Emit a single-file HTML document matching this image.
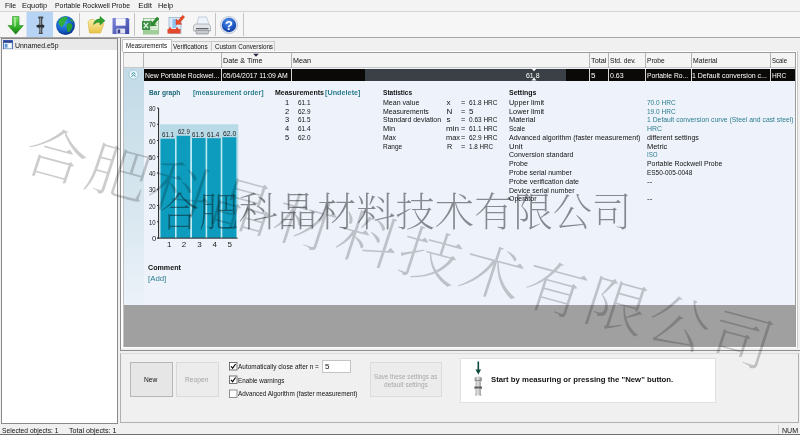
<!DOCTYPE html>
<html><head><meta charset="utf-8">
<title>Equotip</title>
<style>
*{box-sizing:border-box;margin:0;padding:0}
html,body{width:800px;height:435px;overflow:hidden;background:#f0f0f0}
body{position:relative;font-family:"Liberation Sans","Noto Sans CJK SC",sans-serif;font-size:8px;color:#000;line-height:1}
.a{position:absolute;white-space:nowrap}
.t{position:absolute;white-space:nowrap;font-size:8px;line-height:10px;transform-origin:0 0;color:#111}
.wm{position:absolute;white-space:nowrap;font-family:"Liberation Serif","Noto Serif CJK SC",serif;line-height:1;transform-origin:0 0}
</style></head><body>
<div id="root" style="position:absolute;left:0;top:0;width:800px;height:435px;will-change:transform">
<!-- menu bar -->
<div class="a" style="left:0;top:0;width:800px;height:11px;background:#f3f3f3"></div>
<!-- toolbar -->
<div class="a" style="left:0;top:11px;width:800px;height:1px;background:#d4d4d4"></div>
<div class="a" style="left:0;top:12px;width:800px;height:25px;background:#f6f6f6"></div>
<div class="a" style="left:0;top:37px;width:800px;height:1px;background:#a6a6a6"></div>
<svg class="a" style="left:0;top:12px" width="260" height="25" viewBox="0 12 260 25">
<defs>
<linearGradient id="gA" x1="0" y1="0" x2="0" y2="1"><stop offset="0" stop-color="#7be06a"/><stop offset=".55" stop-color="#35b52c"/><stop offset="1" stop-color="#157a12"/></linearGradient>
<radialGradient id="gG" cx=".4" cy=".35" r=".7"><stop offset="0" stop-color="#3fa0f0"/><stop offset=".6" stop-color="#1560c8"/><stop offset="1" stop-color="#0a2f86"/></radialGradient>
<radialGradient id="gH" cx=".45" cy=".3" r=".8"><stop offset="0" stop-color="#5a98ee"/><stop offset=".6" stop-color="#1d55c0"/><stop offset="1" stop-color="#0e2f8a"/></radialGradient>
<linearGradient id="gF" x1="0" y1="0" x2="1" y2="1"><stop offset="0" stop-color="#8088dc"/><stop offset="1" stop-color="#3a46a4"/></linearGradient>
<linearGradient id="gY" x1="0" y1="0" x2="0" y2="1"><stop offset="0" stop-color="#fbeeb0"/><stop offset="1" stop-color="#e8c344"/></linearGradient>
</defs>
<!-- down arrow -->
<path d="M12.5 16.5h6.5v9h4.3L15.7 34.2 8 25.5h4.5z" fill="url(#gA)" stroke="#2c8a26" stroke-width=".6"/>
<path d="M14 17.5h2v9h-2z" fill="#b6f2a8" opacity=".7"/>
<!-- selected probe -->
<rect x="26.5" y="12" width="26.5" height="25" fill="#b8d4f5"/>
<path d="M38.5 16.5h4.5l.5 1.5-1.2 1v5l1.5 1.2v2.3l-1.5 1v3.5l.7 2h-4.4l.6-2v-3.6l-1.6-1v-2.2l1.6-1.2v-5l-1.3-1z" fill="#4a4e54"/>
<path d="M39.8 18h1.2v15h-1.2z" fill="#8a9098"/>
<rect x="36.6" y="25" width="7.6" height="2.2" fill="#2c2f33"/>
<!-- globe -->
<circle cx="65.5" cy="25.5" r="9.4" fill="url(#gG)"/>
<path d="M60 19c2-2 5-2.5 7-2 1 1 .5 2.500-1 3-1 1.500-.5 3-2 4s-1 3-2.500 3c-1.500-1-3-3-3-5 .2-1.200.8-2.200 1.500-3z" fill="#2fae3a"/>
<path d="M67 24c1.500-1 4-1 5 .5 1 2-.5 5.500-3 7.500-1.500.5-2-1.500-2-3s-1-3.500 0-5z" fill="#27a034"/>
<path d="M70 18.500c1.500.8 2.600 2 3.400 3.500-1.200.2-2.400-.5-3-1.500z" fill="#2fae3a"/>
<!-- sep -->
<rect x="79" y="13" width="1" height="23" fill="#c4c4c4"/>
<!-- open folder -->
<path d="M88 22l2-2.500h4l1.500 1.500h6v3l2.500-.5-3.500 9.500H89.500z" fill="url(#gY)" stroke="#d8b43c" stroke-width=".6"/>
<path d="M93.500 24.500c.5-3.500 3-5.500 6.500-5.500v-2.500l5 4.200-5 4.300v-2.600c-2.500-.2-4.600.4-6.500 2.100z" fill="#2ea22e" stroke="#1c7a1c" stroke-width=".5"/>
<!-- floppy -->
<path d="M112.500 18h15.500l1.200 1.200V34h-16.700z" fill="url(#gF)"/>
<rect x="115.800" y="18.300" width="9.800" height="7.400" fill="#f4f6fc"/>
<rect x="116.500" y="28.600" width="8.600" height="5" fill="#dfe3f2"/>
<rect x="117.600" y="29.500" width="2.600" height="3.600" fill="#39408a"/>
<!-- sep -->
<rect x="134" y="13" width="1" height="23" fill="#c4c4c4"/>
<!-- excel export -->
<rect x="143.500" y="18.500" width="15" height="15.500" fill="#e6f3e4" stroke="#86b986" stroke-width=".8"/>
<path d="M143.500 23.500h15M143.500 28.500h15M151 18.500v15.500" stroke="#b4d8b2" stroke-width=".7"/>
<rect x="143.500" y="30" width="15" height="4" fill="#9fce98"/>
<path d="M142 21h8v9h-8z" fill="#3f9149"/>
<path d="M143.800 22.800l4.400 5.400M148.200 22.800l-4.400 5.400" stroke="#e8f6e6" stroke-width="1.300"/>
<path d="M150.500 26v-5.500l2 1.800 4.500-5.300 2 1.700-4.500 5.300 2 1.700z" fill="#2a8a2e" stroke="#1e6e1e" stroke-width=".4"/>
<!-- chart export -->
<rect x="169" y="17.500" width="12" height="16" fill="#dbe9f6" stroke="#9ab6d2" stroke-width=".8"/>
<rect x="172.500" y="19" width="4" height="9" fill="#8ec4ee"/>
<rect x="167.500" y="29" width="13" height="4.500" fill="#e2482c"/>
<rect x="169" y="27.500" width="2.200" height="2" fill="#e2482c"/><rect x="176" y="27.500" width="2.200" height="2" fill="#e2482c"/>
<path d="M176 24.500v-5.500l2 1.800 4.700-5.500 2 1.700-4.700 5.500 2 1.700z" fill="#ea4a26" stroke="#b8321a" stroke-width=".4"/>
<!-- printer -->
<path d="M197 24.500l1.500-7.500h8l2.500 7.500z" fill="#eef4fb" stroke="#a9b7c6" stroke-width=".6"/>
<path d="M193.500 26.500c0-1.500 1.500-2.500 3-2.500h11c1.500 0 3 1 3 2.500v4.500h-17z" fill="#e3e5e8" stroke="#8e949b" stroke-width=".6"/>
<path d="M195.500 30.500h13.500l-1 3.500h-11.500z" fill="#c8ccd1" stroke="#7c8289" stroke-width=".6"/>
<rect x="196" y="28" width="12.500" height="1.300" fill="#5c6168"/>
<!-- sep -->
<rect x="215" y="13" width="1" height="23" fill="#c4c4c4"/>
<!-- help -->
<circle cx="229" cy="25" r="8.600" fill="#dfe6f2" stroke="#aab6cc" stroke-width=".6"/>
<circle cx="229" cy="25" r="7.200" fill="url(#gH)"/>
<text x="229" y="29.600" text-anchor="middle" font-family="Liberation Sans,sans-serif" font-weight="bold" font-size="13" fill="#fff">?</text>
<rect x="243" y="13" width="1" height="23" fill="#c4c4c4"/>
</svg>
<!-- left tree -->
<div class="a" style="left:1px;top:38px;width:117px;height:386px;background:#fff;border:1px solid #8a8a8a"></div>
<div class="a" style="left:2px;top:39px;width:115px;height:10.500px;background:#e9e9e9"></div>
<svg class="a" style="left:3px;top:39.500px" width="10" height="9.500" viewBox="0 0 10 9.500"><rect x=".5" y=".5" width="9" height="8.500" fill="#dfeaf8" stroke="#4468b0" stroke-width=".9"/><rect x=".5" y=".5" width="9" height="2.300" fill="#2b3f95"/><rect x="1.800" y="4" width="2.600" height="3.600" fill="#5f94d8"/><rect x="5.400" y="4" width="2.600" height="3.600" fill="#fff"/></svg>
<!-- right frame -->
<div class="a" style="left:120px;top:38px;width:680px;height:313px;border-left:1px solid #8e8e8e;border-bottom:1px solid #8e8e8e"></div>
<div class="a" style="left:121px;top:51px;width:677px;height:297px;background:#fff;border-right:1px solid #c8c8c8"></div>
<!-- tabs -->
<div class="a" style="left:171px;top:40.500px;width:104px;height:10.500px;background:#f0f0f0;border:1px solid #cacaca;border-bottom:none;border-left:none"></div>
<div class="a" style="left:211px;top:40.500px;width:1px;height:10.500px;background:#cacaca"></div>
<div class="a" style="left:122px;top:39px;width:50px;height:13px;background:#fff;border:1px solid #c4c4c4;border-bottom:none"></div>
<!-- grid -->
<div class="a" style="left:123px;top:52px;width:673px;height:295px;border:1px solid #9c9c9c;border-left-color:#c2c2c2;border-bottom:none"></div>
<div class="a" style="left:124px;top:53px;width:671px;height:15px;background:#f4f4f4"></div>
<div class="a" style="left:124px;top:67px;width:671px;height:1px;background:#c8c8c8"></div>
<div class="a" style="left:124px;top:68px;width:19.500px;height:237px;background:linear-gradient(#c2dbe7,#d6e6ef 55%,#ecf2f9)"></div>
<div class="a" style="left:143.500px;top:68px;width:651.500px;height:237px;background:#eef3fb"></div>
<div class="a" style="left:124px;top:304.500px;width:671px;height:42.500px;background:#a0a0a0"></div>
<div class="a" style="left:144px;top:68.500px;width:650.500px;height:12px;background:#0b0907"></div>
<div class="a" style="left:364.500px;top:68.500px;width:201.500px;height:12px;background:#3a4045"></div>
<div class="a" style="left:142.500px;top:53px;width:1px;height:15px;background:#b4b4b4"></div>
<div class="a" style="left:221px;top:53px;width:1px;height:15px;background:#b4b4b4"></div>
<div class="a" style="left:290.500px;top:53px;width:1px;height:15px;background:#b4b4b4"></div>
<div class="a" style="left:589px;top:53px;width:1px;height:15px;background:#b4b4b4"></div>
<div class="a" style="left:608px;top:53px;width:1px;height:15px;background:#b4b4b4"></div>
<div class="a" style="left:644.500px;top:53px;width:1px;height:15px;background:#b4b4b4"></div>
<div class="a" style="left:690.500px;top:53px;width:1px;height:15px;background:#b4b4b4"></div>
<div class="a" style="left:769.500px;top:53px;width:1px;height:15px;background:#b4b4b4"></div>
<div class="a" style="left:221px;top:68.500px;width:1px;height:12px;background:#d8d8d8"></div>
<div class="a" style="left:290.500px;top:68.500px;width:1px;height:12px;background:#d8d8d8"></div>
<div class="a" style="left:589px;top:68.500px;width:1px;height:12px;background:#d8d8d8"></div>
<div class="a" style="left:608px;top:68.500px;width:1px;height:12px;background:#d8d8d8"></div>
<div class="a" style="left:644.500px;top:68.500px;width:1px;height:12px;background:#d8d8d8"></div>
<div class="a" style="left:690.500px;top:68.500px;width:1px;height:12px;background:#d8d8d8"></div>
<div class="a" style="left:769.500px;top:68.500px;width:1px;height:12px;background:#d8d8d8"></div>
<svg class="a" style="left:252px;top:53px" width="8" height="5"><path d="M1.200 .8h5.600L4 3.800z" fill="#1e2440"/></svg>
<svg class="a" style="left:128px;top:69px" width="11" height="11" viewBox="0 0 11 11"><circle cx="5.500" cy="5.500" r="4.600" fill="#e9f5f9" stroke="#93c3d1" stroke-width=".8"/><path d="M3.500 5.200 5.500 3.400 7.500 5.200M3.500 7.600 5.500 5.800 7.500 7.600" fill="none" stroke="#2e8296" stroke-width="1"/></svg>
<svg class="a" style="left:530px;top:68px" width="8" height="13"><path d="M1.500 .5h5L4 3.200zM1.500 12.500h5L4 9.800z" fill="#fff"/></svg>
<svg class="a" style="left:140px;top:100px" width="110" height="145" viewBox="140 100 110 145"><rect x="160" y="124.25" width="78.3" height="82.88" fill="#b9dbe7"/><rect x="160" y="138.88" width="77" height="99.12" fill="#bdeaf3"/><rect x="160.5" y="138.71" width="14.50" height="99.29" fill="#0d9cbd"/><rect x="176.6" y="135.79" width="13.60" height="102.21" fill="#0d9cbd"/><rect x="192" y="138.06" width="13.60" height="99.94" fill="#0d9cbd"/><rect x="207.2" y="138.23" width="13.50" height="99.77" fill="#0d9cbd"/><rect x="222.3" y="137.25" width="14.10" height="100.75" fill="#0d9cbd"/><rect x="158" y="108.00" width="1.1" height="130.60" fill="#333"/><rect x="157.3" y="237.60" width="80.3" height="1.1" fill="#333"/><rect x="157" y="237.50" width="1.6" height="1" fill="#333"/><rect x="157" y="221.25" width="1.6" height="1" fill="#333"/><rect x="157" y="205.00" width="1.6" height="1" fill="#333"/><rect x="157" y="188.75" width="1.6" height="1" fill="#333"/><rect x="157" y="172.50" width="1.6" height="1" fill="#333"/><rect x="157" y="156.25" width="1.6" height="1" fill="#333"/><rect x="157" y="140.00" width="1.6" height="1" fill="#333"/><rect x="157" y="123.75" width="1.6" height="1" fill="#333"/><rect x="157" y="107.50" width="1.6" height="1" fill="#333"/></svg>
<!-- bottom panel -->
<div class="a" style="left:120px;top:353px;width:679px;height:70px;border:1px solid #b0b0b0;border-top-color:#dcdcdc;background:#f0f0f0"></div>
<div class="a" style="left:129.500px;top:362px;width:43px;height:35px;background:#e6e6e6;border:1px solid #b6b6b6"></div>
<div class="a" style="left:175.500px;top:362px;width:43.500px;height:35px;background:#ececec;border:1px solid #dadada"></div>
<div class="a" style="left:370px;top:362px;width:72px;height:34.500px;background:#ececec;border:1px solid #dcdcdc"></div>
<div class="a" style="left:322px;top:359.500px;width:28.500px;height:13px;background:#fff;border:1px solid #c4c4c4"></div>
<svg class="a" style="left:229px;top:362px" width="9" height="36" viewBox="0 0 9 36"><rect x=".5" y=".5" width="7.500" height="7.500" fill="#fff" stroke="#555" stroke-width=".8"/><path d="M2 4.300l1.600 1.900L6.600 2" fill="none" stroke="#111" stroke-width="1.200"/><rect x=".5" y="14" width="7.500" height="7.500" fill="#fff" stroke="#555" stroke-width=".8"/><path d="M2 17.800l1.600 1.900L6.600 15.500" fill="none" stroke="#111" stroke-width="1.200"/><rect x=".5" y="28" width="7.500" height="7.500" fill="#fff" stroke="#777" stroke-width=".8"/></svg>
<div class="a" style="left:460px;top:357.500px;width:255.500px;height:45px;background:#fff;border:1px solid #e0e0e0"></div>
<svg class="a" style="left:472px;top:360px" width="13" height="37" viewBox="472 360 13 37"><defs><linearGradient id="gP" x1="0" y1="0" x2="1" y2="0"><stop offset="0" stop-color="#8c8c8c"/><stop offset=".45" stop-color="#e6e6e6"/><stop offset="1" stop-color="#7a7a7a"/></linearGradient></defs>
<path d="M477.500 361.500h1.600v8h2l-2.800 5-2.800-5h2z" fill="#0f4b3c"/>
<path d="M474.600 377.800q3.600-2.400 7.200 0v2.400l-1 1v5.200h1v2.600h-1v4.800l.8 1.800h-6.800l.8-1.800v-4.800h-1v-2.600h1v-5.200l-1-1z" fill="url(#gP)"/>
<rect x="474.600" y="386.600" width="7.200" height="1.800" fill="#5a5a5a"/><rect x="474.800" y="380" width="6.800" height=".8" fill="#808080"/>
</svg>
<!-- status bar -->
<div class="a" style="left:0;top:424px;width:800px;height:11px;background:#f0f0f0"></div>
<div class="a" style="left:777.500px;top:425px;width:1px;height:9px;background:#d0d0d0"></div>
<div class="a" style="left:0;top:434px;width:800px;height:1px;background:#6e6e6e"></div>
<div class="t" style="left:4.53px;top:0.50px;transform:scaleX(0.8583);">File</div>
<div class="t" style="left:22.49px;top:0.50px;transform:scaleX(0.9231);">Equotip</div>
<div class="t" style="left:55.03px;top:0.50px;transform:scaleX(0.8563);">Portable Rockwell Probe</div>
<div class="t" style="left:138.15px;top:0.50px;transform:scaleX(1.0000);">Edit</div>
<div class="t" style="left:158.19px;top:0.50px;transform:scaleX(0.9200);">Help</div>
<div class="t" style="left:15.32px;top:40.50px;transform:scaleX(0.8653);">Unnamed.e5p</div>
<div class="t" style="left:125.57px;top:40.50px;transform:scaleX(0.7788);">Measurements</div>
<div class="t" style="left:173.36px;top:41.50px;transform:scaleX(0.8024);">Verifications</div>
<div class="t" style="left:214.57px;top:41.50px;transform:scaleX(0.7808);">Custom Conversions</div>
<div class="t" style="left:223.31px;top:55.50px;transform:scaleX(0.9000);">Date &amp; Time</div>
<div class="t" style="left:292.51px;top:55.50px;transform:scaleX(0.8947);">Mean</div>
<div class="t" style="left:590.50px;top:55.50px;transform:scaleX(0.9125);">Total</div>
<div class="t" style="left:610.34px;top:55.50px;transform:scaleX(0.8333);">Std. dev.</div>
<div class="t" style="left:646.95px;top:55.50px;transform:scaleX(0.8250);">Probe</div>
<div class="t" style="left:693.13px;top:55.50px;transform:scaleX(0.8556);">Material</div>
<div class="t" style="left:772.09px;top:55.50px;transform:scaleX(0.7526);">Scale</div>
<div class="t" style="left:145.03px;top:70.50px;transform:scaleX(0.8523);color:#fff">New Portable Rockwel...</div>
<div class="t" style="left:223.03px;top:70.50px;transform:scaleX(0.8581);color:#fff">05/04/2017 11:09 AM</div>
<div class="t" style="left:526.02px;top:70.50px;transform:scaleX(0.8667);color:#fff">61.8</div>
<div class="t" style="left:590.95px;top:70.50px;transform:scaleX(1.0000);color:#fff">5</div>
<div class="t" style="left:610.32px;top:70.50px;transform:scaleX(0.8800);color:#fff">0.63</div>
<div class="t" style="left:646.94px;top:70.50px;transform:scaleX(0.8417);color:#fff">Portable Ro...</div>
<div class="t" style="left:692.32px;top:70.50px;transform:scaleX(0.8729);color:#fff">1 Default conversion c...</div>
<div class="t" style="left:772.05px;top:70.50px;transform:scaleX(0.8250);color:#fff">HRC</div>
<div class="t" style="left:148.84px;top:87.50px;transform:scaleX(0.8297);font-weight:bold;color:#1d6676">Bar graph</div>
<div class="t" style="left:192.81px;top:87.50px;transform:scaleX(0.8823);font-weight:bold;color:#2c7d8e">[measurement order]</div>
<div class="t" style="left:274.52px;top:87.50px;transform:scaleX(0.8727);font-weight:bold">Measurements</div>
<div class="t" style="left:324.50px;top:87.50px;transform:scaleX(0.9079);font-weight:bold;color:#2c7d8e">[Undelete]</div>
<div class="t" style="left:383.35px;top:87.50px;transform:scaleX(0.8200);font-weight:bold">Statistics</div>
<div class="t" style="left:508.82px;top:87.50px;transform:scaleX(0.8710);font-weight:bold">Settings</div>
<div class="t" style="left:284.99px;top:97.50px;transform:scaleX(0.9333);">1</div>
<div class="t" style="left:297.56px;top:97.50px;transform:scaleX(0.8000);">61.1</div>
<div class="t" style="left:284.99px;top:106.50px;transform:scaleX(0.9333);">2</div>
<div class="t" style="left:297.56px;top:106.50px;transform:scaleX(0.8000);">62.9</div>
<div class="t" style="left:284.99px;top:114.50px;transform:scaleX(0.9333);">3</div>
<div class="t" style="left:297.56px;top:114.50px;transform:scaleX(0.8000);">61.5</div>
<div class="t" style="left:284.99px;top:123.50px;transform:scaleX(0.9333);">4</div>
<div class="t" style="left:297.56px;top:123.50px;transform:scaleX(0.8000);">61.4</div>
<div class="t" style="left:284.99px;top:132.50px;transform:scaleX(0.9333);">5</div>
<div class="t" style="left:297.56px;top:132.50px;transform:scaleX(0.8000);">62.0</div>
<div class="t" style="left:383.32px;top:97.50px;transform:scaleX(0.8800);">Mean value</div>
<div class="t" style="left:446.45px;top:97.50px;transform:scaleX(1.0000);">x</div>
<div class="t" style="left:460.79px;top:97.50px;transform:scaleX(0.9250);">=</div>
<div class="t" style="left:469.06px;top:97.50px;transform:scaleX(0.8088);">61.8 HRC</div>
<div class="t" style="left:383.32px;top:106.50px;transform:scaleX(0.8654);">Measurements</div>
<div class="t" style="left:446.45px;top:106.50px;transform:scaleX(1.0000);">N</div>
<div class="t" style="left:460.79px;top:106.50px;transform:scaleX(0.9250);">=</div>
<div class="t" style="left:468.95px;top:106.50px;transform:scaleX(1.0000);">5</div>
<div class="t" style="left:383.32px;top:114.50px;transform:scaleX(0.8712);">Standard deviation</div>
<div class="t" style="left:446.45px;top:114.50px;transform:scaleX(1.0000);">s</div>
<div class="t" style="left:460.79px;top:114.50px;transform:scaleX(0.9250);">=</div>
<div class="t" style="left:469.06px;top:114.50px;transform:scaleX(0.8088);">0.63 HRC</div>
<div class="t" style="left:383.29px;top:123.50px;transform:scaleX(0.9333);">Min</div>
<div class="t" style="left:445.95px;top:123.50px;transform:scaleX(1.0000);">min</div>
<div class="t" style="left:460.79px;top:123.50px;transform:scaleX(0.9250);">=</div>
<div class="t" style="left:469.06px;top:123.50px;transform:scaleX(0.8088);">61.1 HRC</div>
<div class="t" style="left:383.33px;top:132.50px;transform:scaleX(0.8571);">Max</div>
<div class="t" style="left:445.99px;top:132.50px;transform:scaleX(0.9286);">max</div>
<div class="t" style="left:460.79px;top:132.50px;transform:scaleX(0.9250);">=</div>
<div class="t" style="left:469.06px;top:132.50px;transform:scaleX(0.8088);">62.9 HRC</div>
<div class="t" style="left:383.35px;top:141.50px;transform:scaleX(0.8130);">Range</div>
<div class="t" style="left:446.50px;top:141.50px;transform:scaleX(0.9000);">R</div>
<div class="t" style="left:460.79px;top:141.50px;transform:scaleX(0.9250);">=</div>
<div class="t" style="left:469.07px;top:141.50px;transform:scaleX(0.7833);">1.8 HRC</div>
<div class="t" style="left:508.79px;top:97.50px;transform:scaleX(0.9189);">Upper limit</div>
<div class="t" style="left:647.15px;top:97.50px;transform:scaleX(0.8147);color:#2c7d8e">70.0 HRC</div>
<div class="t" style="left:508.79px;top:106.50px;transform:scaleX(0.9189);">Lower limit</div>
<div class="t" style="left:647.15px;top:106.50px;transform:scaleX(0.8147);color:#2c7d8e">19.0 HRC</div>
<div class="t" style="left:508.79px;top:114.50px;transform:scaleX(0.9259);">Material</div>
<div class="t" style="left:647.13px;top:114.50px;transform:scaleX(0.8515);color:#2c7d8e">1 Default conversion curve (Steel and cast steel)</div>
<div class="t" style="left:508.86px;top:123.50px;transform:scaleX(0.8000);">Scale</div>
<div class="t" style="left:647.13px;top:123.50px;transform:scaleX(0.8625);color:#2c7d8e">HRC</div>
<div class="t" style="left:508.82px;top:132.50px;transform:scaleX(0.8797);">Advanced algorithm (faster measurement)</div>
<div class="t" style="left:647.11px;top:132.50px;transform:scaleX(0.8862);">different settings</div>
<div class="t" style="left:508.77px;top:141.50px;transform:scaleX(0.9615);">Unit</div>
<div class="t" style="left:647.09px;top:141.50px;transform:scaleX(0.9333);">Metric</div>
<div class="t" style="left:508.82px;top:149.50px;transform:scaleX(0.8726);">Conversion standard</div>
<div class="t" style="left:647.18px;top:149.50px;transform:scaleX(0.7692);color:#2c7d8e">ISO</div>
<div class="t" style="left:508.81px;top:158.50px;transform:scaleX(0.8850);">Probe</div>
<div class="t" style="left:647.13px;top:158.50px;transform:scaleX(0.8598);">Portable Rockwell Probe</div>
<div class="t" style="left:508.82px;top:167.50px;transform:scaleX(0.8732);">Probe serial number</div>
<div class="t" style="left:647.16px;top:167.50px;transform:scaleX(0.8073);">ES50-005-0048</div>
<div class="t" style="left:508.82px;top:176.50px;transform:scaleX(0.8797);">Probe verification date</div>
<div class="t" style="left:647.05px;top:176.50px;transform:scaleX(1.0000);">--</div>
<div class="t" style="left:508.82px;top:185.50px;transform:scaleX(0.8716);">Device serial number</div>
<div class="t" style="left:508.82px;top:193.50px;transform:scaleX(0.8710);">Operator</div>
<div class="t" style="left:647.05px;top:193.50px;transform:scaleX(1.0000);">--</div>
<div class="t" style="left:151.77px;top:233.50px;transform:scaleX(0.9667);color:#222">0</div>
<div class="t" style="left:148.99px;top:217.50px;transform:scaleX(0.7400);color:#222">10</div>
<div class="t" style="left:148.99px;top:201.50px;transform:scaleX(0.7400);color:#222">20</div>
<div class="t" style="left:148.99px;top:184.50px;transform:scaleX(0.7400);color:#222">30</div>
<div class="t" style="left:148.99px;top:168.50px;transform:scaleX(0.7400);color:#222">40</div>
<div class="t" style="left:148.99px;top:152.50px;transform:scaleX(0.7400);color:#222">50</div>
<div class="t" style="left:148.99px;top:136.50px;transform:scaleX(0.7400);color:#222">60</div>
<div class="t" style="left:148.99px;top:119.50px;transform:scaleX(0.7400);color:#222">70</div>
<div class="t" style="left:148.99px;top:103.50px;transform:scaleX(0.7400);color:#222">80</div>
<div class="t" style="left:162.08px;top:129.50px;transform:scaleX(0.7667);color:#222">61.1</div>
<div class="t" style="left:177.59px;top:126.50px;transform:scaleX(0.7533);color:#222">62.9</div>
<div class="t" style="left:192.38px;top:129.50px;transform:scaleX(0.7667);color:#222">61.5</div>
<div class="t" style="left:207.07px;top:129.50px;transform:scaleX(0.7867);color:#222">61.4</div>
<div class="t" style="left:222.53px;top:128.50px;transform:scaleX(0.8533);color:#222">62.0</div>
<div class="t" style="left:166.95px;top:239.50px;transform:scaleX(1.0000);color:#222">1</div>
<div class="t" style="left:181.85px;top:239.50px;transform:scaleX(1.0000);color:#222">2</div>
<div class="t" style="left:197.35px;top:239.50px;transform:scaleX(1.0000);color:#222">3</div>
<div class="t" style="left:212.45px;top:239.50px;transform:scaleX(1.0000);color:#222">4</div>
<div class="t" style="left:227.55px;top:239.50px;transform:scaleX(1.0000);color:#222">5</div>
<div class="t" style="left:148.41px;top:262.50px;transform:scaleX(0.8917);font-weight:bold">Comment</div>
<div class="t" style="left:148.36px;top:273.50px;transform:scaleX(0.9778);color:#2c7d8e">[Add]</div>
<div class="t" style="left:144.04px;top:374.50px;transform:scaleX(0.8333);">New</div>
<div class="t" style="left:184.54px;top:374.50px;transform:scaleX(0.8333);color:#a3a3a3">Reopen</div>
<div class="t" style="left:238.16px;top:361.50px;transform:scaleX(0.8061);">Automatically close after n =</div>
<div class="t" style="left:325.05px;top:361.50px;transform:scaleX(1.0000);">5</div>
<div class="t" style="left:238.17px;top:375.50px;transform:scaleX(0.7828);">Enable warnings</div>
<div class="t" style="left:238.16px;top:388.50px;transform:scaleX(0.7973);">Advanced Algorithm (faster measurement)</div>
<div class="t" style="left:374.07px;top:371.50px;transform:scaleX(0.7875);color:#a8a8a8">Save these settings as</div>
<div class="t" style="left:383.95px;top:379.50px;transform:scaleX(0.8151);color:#a8a8a8">default settings</div>
<div class="t" style="left:491.27px;top:374.50px;transform:scaleX(0.9690);font-weight:bold">Start by measuring or pressing the "New" button.</div>
<div class="t" style="left:1.54px;top:425.50px;transform:scaleX(0.8358);">Selected objects: 1</div>
<div class="t" style="left:68.81px;top:425.50px;transform:scaleX(0.8885);">Total objects: 1</div>
<div class="t" style="left:781.51px;top:425.50px;transform:scaleX(0.8824);">NUM</div>
<!-- watermarks -->
<div class="wm" style="left:35.300px;top:122px;font-size:62px;letter-spacing:2.500px;font-weight:200;color:rgba(0,0,0,.2);transform:rotate(15deg) skewX(-3deg) scaleY(.93)">合肥科晶材料技术有限公司</div>
<div class="wm" style="left:159.800px;top:193.600px;font-size:39.300px;letter-spacing:0;font-weight:200;color:rgba(10,12,16,.46);transform:translateZ(0)">合肥科晶材料技术有限公司</div>
</div>
</body></html>
